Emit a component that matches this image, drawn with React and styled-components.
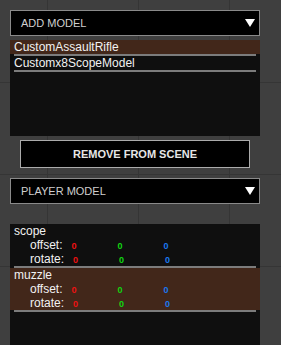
import styled, { createGlobalStyle } from 'styled-components'

const GlobalStyle = createGlobalStyle`
  html, body {
    margin: 0;
    padding: 0;
    height: 100%;
    overflow: hidden;
  }
  body {
    font-family: "Liberation Sans", Arial, sans-serif;
    background-color: #3f3f3f;
    background-image:
      linear-gradient(to right, #353535 1px, transparent 1px),
      linear-gradient(to bottom, #353535 1px, transparent 1px);
    background-size: 91px 92px;
    background-position: 47px 82px;
  }
`
const Page = styled.div`
  display: flex;
  flex-direction: column;
  padding: 10px 21px 0 10px;
  box-sizing: border-box;
  border-left: 2px solid #474747;
  margin-left: -2px;
  & > * {
    flex-shrink: 0;
  }
`
const Dropdown = styled.div`
  height: 26px;
  box-sizing: border-box;
  border: 1px solid #8a8a8a;
  background: #000;
  display: flex;
  align-items: center;
  justify-content: space-between;
  padding: 0 4px 0 10px;
  color: #cfcfcf;
  font-size: 11px;
  margin-bottom: ${(p) => p.$gap}px;
`
const Arrow = () => (
  <svg width="10" height="8" viewBox="0 0 10 8">
    <path d="M0 0 H10 L5 8 Z" fill="#fff" />
  </svg>
)
const ListPanel = styled.div`
  background: #0f0f0f;
  height: ${(p) => p.$height}px;
`
const Item = styled.div`
  height: 14px;
  line-height: 14px;
  padding-left: 4px;
  font-size: 12px;
  color: #f2f2f2;
  background: ${(p) => (p.$selected ? '#42271a' : 'transparent')};
`
const Separator = styled.div`
  height: 2px;
  margin: 0 4px;
  background: #7c7c7c;
`
const RemoveButton = styled.button`
  margin: 4px 10px 10px;
  height: 28px;
  box-sizing: border-box;
  border: 1px solid #ababab;
  background: #000;
  color: #e6e6e6;
  font-family: "Liberation Sans", Arial, sans-serif;
  font-weight: bold;
  font-size: 11px;
  padding: 0;
  cursor: pointer;
`
const Block = styled.div`
  background: ${(p) => (p.$selected ? '#42271a' : 'transparent')};
  color: #f2f2f2;
  font-size: 12px;
`
const NameRow = styled.div`
  height: 14px;
  line-height: 14px;
  padding-left: 4px;
`
const ValueRow = styled.div`
  height: 14px;
  line-height: 14px;
  padding-left: 20px;
  display: flex;
  align-items: baseline;
`
const Label = styled.span`
  margin-right: 9px;
`
const Value = styled.span`
  width: 46px;
  font-size: 9px;
  font-weight: bold;
  color: ${(p) => p.$color};
`

const models = [
  { name: 'CustomAssaultRifle', selected: true },
  { name: 'Customx8ScopeModel' },
]
const parts = [
  { name: 'scope' },
  { name: 'muzzle', selected: true },
]
const axisColors = ['#ee1111', '#11d611', '#1a78f0']

const Vec = ({ label }) => (
  <ValueRow>
    <Label>{label}</Label>
    {axisColors.map((c) => (
      <Value key={c} $color={c}>
        0
      </Value>
    ))}
  </ValueRow>
)

const App = () => {
  return (
    <>
      <GlobalStyle />
      <Page>
        <Dropdown $gap={4}>
          ADD MODEL
          <Arrow />
        </Dropdown>
        <ListPanel $height={96}>
          {models.map((m) => (
            <div key={m.name}>
              <Item $selected={m.selected}>{m.name}</Item>
              <Separator />
            </div>
          ))}
        </ListPanel>
        <RemoveButton>REMOVE FROM SCENE</RemoveButton>
        <Dropdown $gap={20}>
          PLAYER MODEL
          <Arrow />
        </Dropdown>
        <ListPanel $height={130}>
          {parts.map((p) => (
            <div key={p.name}>
              <Block $selected={p.selected}>
                <NameRow>{p.name}</NameRow>
                <Vec label="offset:" />
                <Vec label="rotate:" />
              </Block>
              <Separator />
            </div>
          ))}
        </ListPanel>
      </Page>
    </>
  )
}

export default App
